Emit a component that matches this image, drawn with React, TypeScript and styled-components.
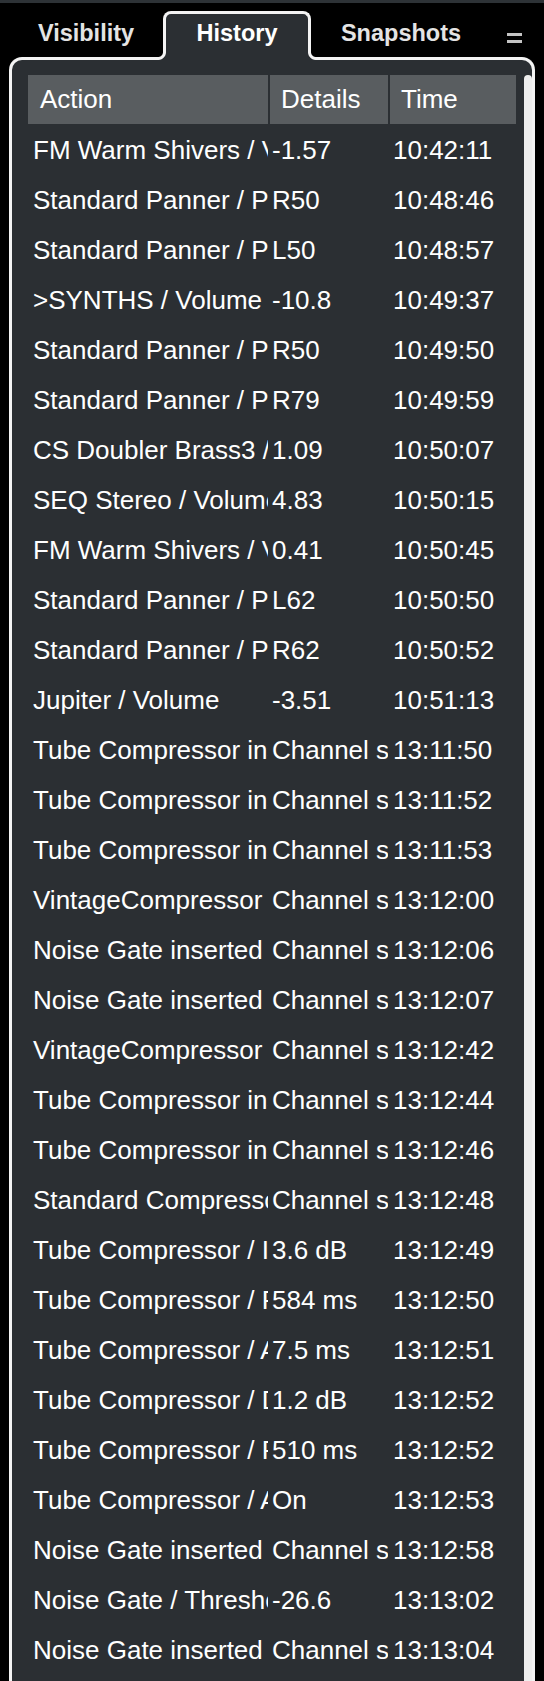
import React from "react";
import styled, { createGlobalStyle } from "styled-components";

const GlobalStyle = createGlobalStyle`
  html, body {
    margin: 0;
    padding: 0;
    background: #000;
    overflow: hidden;
    height: 1681px;
  }
  body {
    font-family: "Liberation Sans", Arial, Helvetica, sans-serif;
  }
`;

const PANEL = "#2b2f33";
const EDGE = "#f4f4f4";
const A = 5;

const Page = styled.div`
  width: 544px;
  height: 1681px;
  overflow: hidden;
  background: #000;
`;

const TopStrip = styled.div`
  height: 3px;
  background: #2d3236;
`;

const TabBar = styled.div`
  position: relative;
  z-index: 2;
  display: flex;
  align-items: flex-end;
  height: 54px;
  padding-left: 9px;
`;

const Tab = styled.div<{ $w: number; $active?: boolean }>`
  position: relative;
  box-sizing: border-box;
  width: ${(p) => p.$w}px;
  height: ${(p) => (p.$active ? 49 : 46)}px;
  margin-bottom: ${(p) => (p.$active ? -3 : 0)}px;
  display: flex;
  justify-content: center;
  align-items: flex-start;
  padding-top: ${(p) => (p.$active ? 5 : 8)}px;
  font-weight: 700;
  font-size: 23.5px;
  line-height: 28px;
  color: ${(p) => (p.$active ? "#ffffff" : "#e4e4e4")};
  background: ${(p) => (p.$active ? PANEL : "transparent")};
  border: ${(p) => (p.$active ? `3px solid ${EDGE}` : "none")};
  border-bottom: none;
  border-radius: 8px 8px 0 0;

  ${(p) =>
    p.$active &&
    `
    &::before, &::after {
      content: "";
      position: absolute;
      bottom: 0;
      width: ${A + 3}px;
      height: ${A + 3}px;
    }
    &::before {
      left: -${A + 3}px;
      background: radial-gradient(circle at 0 0, #000 ${A - 0.5}px, ${EDGE} ${A + 0.5}px, ${EDGE} ${A + 2.5}px, ${PANEL} ${A + 3.5}px);
    }
    &::after {
      right: -${A + 3}px;
      background: radial-gradient(circle at 100% 0, #000 ${A - 0.5}px, ${EDGE} ${A + 0.5}px, ${EDGE} ${A + 2.5}px, ${PANEL} ${A + 3.5}px);
    }
  `}
`;

const MenuButton = styled.div`
  align-self: flex-start;
  margin-top: 30px;
  margin-left: 16px;
  width: 15px;
  display: flex;
  flex-direction: column;
  gap: 4px;
`;

const MenuBar = styled.span`
  display: block;
  height: 3px;
  background: #c4c4c4;
`;

const Panel = styled.div`
  position: relative;
  z-index: 1;
  box-sizing: border-box;
  margin-left: 9px;
  width: 526px;
  height: 1700px;
  border: 3px solid ${EDGE};
  border-bottom: none;
  border-radius: 13px 13px 0 0;
  background: ${PANEL};
  padding: 15px 0 0 16px;
  display: flex;
`;

const Table = styled.div`
  width: 488px;
  display: flex;
  flex-direction: column;
`;

const Track = styled.div`
  margin-left: 8px;
  width: 8px;
  background: #eeeeee;
  border-radius: 6px 6px 0 0;
`;

const HeaderRow = styled.div`
  display: grid;
  grid-template-columns: 240px 120px 128px;
  height: 49px;
  margin-bottom: 1px;
  background: #595d60;
`;

const HeaderCell = styled.div<{ $divider?: boolean; $pad: number }>`
  display: flex;
  align-items: center;
  padding-left: ${(p) => p.$pad}px;
  border-left: ${(p) => (p.$divider ? `2px solid ${PANEL}` : "none")};
  font-size: 26px;
  color: #ffffff;
  white-space: nowrap;
  overflow: hidden;
`;

const Row = styled.div`
  display: grid;
  grid-template-columns: 240px 120px 128px;
  height: 50px;
`;

const Cell = styled.div<{ $pad: number }>`
  padding-left: ${(p) => p.$pad}px;
  font-size: 26px;
  line-height: 50px;
  color: #ffffff;
  white-space: nowrap;
  overflow: hidden;
`;

type Entry = [string, string, string];

const ROWS: Entry[] = [
  ["FM Warm Shivers / Volume", "-1.57", "10:42:11"],
  ["Standard Panner / Pan", "R50", "10:48:46"],
  ["Standard Panner / Pan", "L50", "10:48:57"],
  [">SYNTHS / Volume", "-10.8", "10:49:37"],
  ["Standard Panner / Pan", "R50", "10:49:50"],
  ["Standard Panner / Pan", "R79", "10:49:59"],
  ["CS Doubler Brass3 / Volume", "1.09", "10:50:07"],
  ["SEQ Stereo / Volume", "4.83", "10:50:15"],
  ["FM Warm Shivers / Volume", "0.41", "10:50:45"],
  ["Standard Panner / Pan", "L62", "10:50:50"],
  ["Standard Panner / Pan", "R62", "10:50:52"],
  ["Jupiter / Volume", "-3.51", "10:51:13"],
  ["Tube Compressor inserted", "Channel settings", "13:11:50"],
  ["Tube Compressor inserted", "Channel settings", "13:11:52"],
  ["Tube Compressor inserted", "Channel settings", "13:11:53"],
  ["VintageCompressor inserted", "Channel settings", "13:12:00"],
  ["Noise Gate inserted", "Channel settings", "13:12:06"],
  ["Noise Gate inserted", "Channel settings", "13:12:07"],
  ["VintageCompressor inserted", "Channel settings", "13:12:42"],
  ["Tube Compressor inserted", "Channel settings", "13:12:44"],
  ["Tube Compressor inserted", "Channel settings", "13:12:46"],
  ["Standard Compressor inserted", "Channel settings", "13:12:48"],
  ["Tube Compressor / Input", "3.6 dB", "13:12:49"],
  ["Tube Compressor / Release", "584 ms", "13:12:50"],
  ["Tube Compressor / Attack", "7.5 ms", "13:12:51"],
  ["Tube Compressor / Drive", "1.2 dB", "13:12:52"],
  ["Tube Compressor / Release", "510 ms", "13:12:52"],
  ["Tube Compressor / Auto", "On", "13:12:53"],
  ["Noise Gate inserted", "Channel settings", "13:12:58"],
  ["Noise Gate / Threshold", "-26.6", "13:13:02"],
  ["Noise Gate inserted", "Channel settings", "13:13:04"],
];

export default function App() {
  return (
    <Page>
      <GlobalStyle />
      <TopStrip />
      <TabBar>
        <Tab $w={154}>Visibility</Tab>
        <Tab $w={148} $active>
          History
        </Tab>
        <Tab $w={180}>Snapshots</Tab>
        <MenuButton>
          <MenuBar />
          <MenuBar />
        </MenuButton>
      </TabBar>
      <Panel>
        <Table>
          <HeaderRow>
            <HeaderCell $pad={12}>Action</HeaderCell>
            <HeaderCell $pad={11} $divider>
              Details
            </HeaderCell>
            <HeaderCell $pad={11} $divider>
              Time
            </HeaderCell>
          </HeaderRow>
          {ROWS.map(([action, details, time], i) => (
            <Row key={i}>
              <Cell $pad={5}>{action}</Cell>
              <Cell $pad={4}>{details}</Cell>
              <Cell $pad={5}>{time}</Cell>
            </Row>
          ))}
        </Table>
        <Track />
      </Panel>
    </Page>
  );
}
